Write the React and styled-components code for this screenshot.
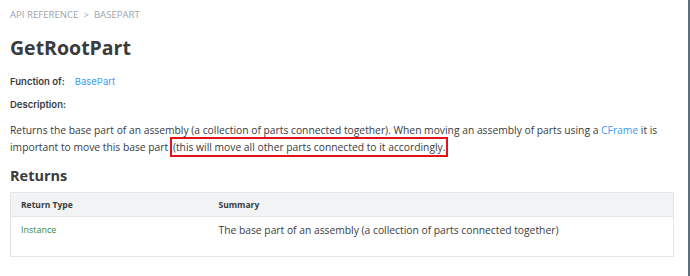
import styled, { createGlobalStyle } from 'styled-components';

const GlobalStyle = createGlobalStyle`
    html, body {
        margin: 0;
        padding: 0;
        background: #fff;
    }
`

const rows = [
    { type: "Instance", summary: "The base part of an assembly (a collection of parts connected together)" },
];

const App = () => {
  return (
    <>
    <GlobalStyle />
    <Page>
        <Breadcrumb>
            <span>API REFERENCE</span>
            <span>&gt;</span>
            <span>BASEPART</span>
        </Breadcrumb>
        <Title>GetRootPart</Title>
        <Field>
            <FieldLabel>Function of:</FieldLabel>
            <Link>BasePart</Link>
        </Field>
        <Field $gap={12}>
            <FieldLabel>Description:</FieldLabel>
        </Field>
        <Paragraph>
            Returns the base part of an assembly (a collection of parts connected together). When moving an assembly of parts using a <Link>CFrame</Link> it is important to move this base part <Marked>(this will move all other parts connected to it accordingly.</Marked>
        </Paragraph>
        <SectionTitle>Returns</SectionTitle>
        <Table>
            <thead>
                <tr>
                    <Th $width={198}>Return Type</Th>
                    <Th>Summary</Th>
                </tr>
            </thead>
            <tbody>
                {rows.map((r) => (
                    <tr key={r.type}>
                        <TypeCell>{r.type}</TypeCell>
                        <Td>{r.summary}</Td>
                    </tr>
                ))}
            </tbody>
        </Table>
    </Page>
    </>
  )
}

const Page = styled.div`
    width: 690px;
    height: 276px;
    box-sizing: border-box;
    padding: 9px 16px 0 10px;
    border-right: 2px solid #5f6e7c;
    font-family: 'Open Sans', sans-serif;
    color: #393b3d;
    overflow: hidden;
`

const Breadcrumb = styled.div`
    display: flex;
    align-items: center;
    gap: 5px;
    font-size: 9.6px;
    line-height: 12px;
    color: #9da4ab;
`

const Title = styled.h1`
    margin: 14px 0 0;
    font-size: 19.5px;
    line-height: 26px;
    font-weight: 700;
    color: #393b3d;
`

const Field = styled.div`
    display: flex;
    gap: 10px;
    margin-top: ${(p) => (p.$gap ? `${p.$gap}px` : '15px')};
    font-family: 'Inter', sans-serif;
    font-size: 9.5px;
    line-height: 11px;
`

const FieldLabel = styled.span`
    font-weight: 600;
    color: #393b3d;
`

const Link = styled.span`
    color: #3a9cf2;
`

const Paragraph = styled.p`
    margin: 12px 0 0;
    font-size: 10.3px;
    line-height: 17px;
`

const Marked = styled.span`
    border: 2px solid #e4111b;
    padding: 1px 1px;
    margin-left: -1px;
`

const SectionTitle = styled.h2`
    margin: 10px 0 0;
    font-size: 14.5px;
    line-height: 20px;
    font-weight: 700;
`

const Table = styled.table`
    width: 664px;
    margin-top: 6px;
    border-collapse: collapse;
    border: 1px solid #e3e5e8;
`

const Th = styled.th`
    width: ${(p) => (p.$width ? `${p.$width}px` : 'auto')};
    box-sizing: border-box;
    height: 24px;
    padding: 0 10px;
    text-align: left;
    background: #f2f3f5;
    border-bottom: 1px solid #e3e5e8;
    font-size: 8.5px;
    font-weight: 700;
    color: #393b3d;
`

const Td = styled.td`
    height: 33px;
    padding: 6px 10px 0;
    vertical-align: top;
    font-size: 10.3px;
    color: #393b3d;
`

const TypeCell = styled(Td)`
    font-size: 9px;
    color: #3c8a2e;
`

export default App;
